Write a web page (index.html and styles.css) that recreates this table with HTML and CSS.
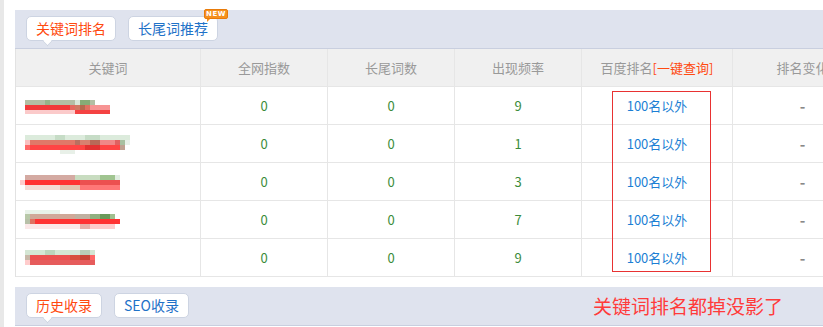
FILE: index.html
```html
<!DOCTYPE html>
<html lang="zh">
<head>
<meta charset="utf-8">
<link rel="stylesheet" href="styles.css">
</head>
<body>
<div class="page">
  <div class="bar">
    <span class="tab active w90">关键词排名</span>
    <span class="tab w90">长尾词推荐<span class="badge">NEW</span></span>
  </div>
  <div class="table">
    <div class="row head">
      <div class="cell">关键词</div>
      <div class="cell">全网指数</div>
      <div class="cell">长尾词数</div>
      <div class="cell">出现频率</div>
      <div class="cell">百度排名<span class="query">[一键查询]</span></div>
      <div class="cell">排名变化</div>
    </div>
    <div class="row">
      <div class="cell kw"><svg width="120" height="37" viewBox="0 0 120 37">
        <rect x="5" y="13" width="70" height="5" fill="#b3bfa4"/><rect x="25" y="13" width="5" height="5" fill="#96b488"/><rect x="55" y="13" width="5" height="5" fill="#d8e8d8"/><rect x="60" y="13" width="10" height="5" fill="#86ad76"/>
        <rect x="5" y="18" width="45" height="5" fill="#f23a3a"/><rect x="50" y="18" width="5" height="5" fill="#e46a5e"/><rect x="55" y="18" width="5" height="5" fill="#d07a62"/><rect x="60" y="18" width="5" height="5" fill="#b66a4e"/><rect x="65" y="18" width="5" height="5" fill="#e07060"/><rect x="70" y="18" width="20" height="5" fill="#f79494"/>
        <rect x="5" y="23" width="50" height="4" fill="#fbcaca"/><rect x="55" y="23" width="35" height="4" fill="#f44242"/>
      </svg></div>
      <div class="cell num">0</div>
      <div class="cell num">0</div>
      <div class="cell num">9</div>
      <div class="cell rank">100名以外</div>
      <div class="cell dash">-</div>
    </div>
    <div class="row">
      <div class="cell kw"><svg width="120" height="37" viewBox="0 0 120 37">
        <rect x="5" y="10" width="105" height="5" fill="#dcebdc"/><rect x="35" y="10" width="10" height="5" fill="#c6dcc6"/><rect x="65" y="10" width="15" height="5" fill="#c6dcc6"/>
        <rect x="5" y="15" width="5" height="5" fill="#f9c0c0"/><rect x="10" y="15" width="45" height="5" fill="#e07868"/><rect x="55" y="15" width="5" height="5" fill="#b87060"/><rect x="60" y="15" width="10" height="5" fill="#d88070"/><rect x="70" y="15" width="10" height="5" fill="#b86a58"/><rect x="80" y="15" width="15" height="5" fill="#f08888"/><rect x="95" y="15" width="5" height="5" fill="#e06060"/><rect x="100" y="15" width="5" height="5" fill="#a8c0a0"/><rect x="105" y="15" width="5" height="5" fill="#e8f0e8"/>
        <rect x="5" y="20" width="5" height="5" fill="#f66"/><rect x="10" y="20" width="90" height="5" fill="#f44"/><rect x="65" y="20" width="15" height="5" fill="#e33232"/><rect x="100" y="20" width="5" height="5" fill="#c0a090"/>
        <rect x="40" y="25" width="15" height="4" fill="#e8f0e8"/>
      </svg></div>
      <div class="cell num">0</div>
      <div class="cell num">0</div>
      <div class="cell num">1</div>
      <div class="cell rank">100名以外</div>
      <div class="cell dash">-</div>
    </div>
    <div class="row">
      <div class="cell kw"><svg width="120" height="37" viewBox="0 0 120 37">
        <rect x="5" y="12" width="50" height="5" fill="#d4aaa2"/><rect x="55" y="12" width="25" height="5" fill="#c8dcc0"/><rect x="80" y="12" width="15" height="5" fill="#a0c490"/><rect x="95" y="12" width="5" height="5" fill="#e0ece0"/>
        <rect x="0" y="17" width="5" height="5" fill="#fcc"/><rect x="5" y="17" width="55" height="5" fill="#f33"/><rect x="60" y="17" width="40" height="5" fill="#ec5050"/>
        <rect x="5" y="22" width="55" height="5" fill="#f4dcd6"/><rect x="40" y="22" width="20" height="5" fill="#e4c4b0"/><rect x="60" y="22" width="40" height="5" fill="#f77"/>
      </svg></div>
      <div class="cell num">0</div>
      <div class="cell num">0</div>
      <div class="cell num">3</div>
      <div class="cell rank">100名以外</div>
      <div class="cell dash">-</div>
    </div>
    <div class="row">
      <div class="cell kw"><svg width="120" height="37" viewBox="0 0 120 37">
        <rect x="5" y="9" width="35" height="4" fill="#e8f2e8"/>
        <rect x="5" y="13" width="5" height="5" fill="#b8c8a8"/><rect x="10" y="13" width="45" height="5" fill="#d0a898"/><rect x="55" y="13" width="15" height="5" fill="#c0b0a0"/><rect x="70" y="13" width="10" height="5" fill="#90b080"/><rect x="80" y="13" width="10" height="5" fill="#6a9a5a"/><rect x="90" y="13" width="5" height="5" fill="#a0c090"/>
        <rect x="5" y="18" width="5" height="5" fill="#b8c0a8"/><rect x="10" y="18" width="5" height="5" fill="#e07060"/><rect x="15" y="18" width="85" height="5" fill="#f33"/>
        <rect x="5" y="23" width="55" height="5" fill="#fbe8e8"/><rect x="60" y="23" width="10" height="5" fill="#e8b0a8"/><rect x="70" y="23" width="25" height="5" fill="#fcc"/>
      </svg></div>
      <div class="cell num">0</div>
      <div class="cell num">0</div>
      <div class="cell num">7</div>
      <div class="cell rank">100名以外</div>
      <div class="cell dash">-</div>
    </div>
    <div class="row">
      <div class="cell kw"><svg width="120" height="37" viewBox="0 0 120 37">
        <rect x="5" y="11" width="70" height="5" fill="#d4e6d4"/><rect x="25" y="11" width="10" height="5" fill="#bcd4bc"/><rect x="60" y="11" width="10" height="5" fill="#b8d0b8"/>
        <rect x="5" y="16" width="5" height="5" fill="#c8b8a8"/><rect x="10" y="16" width="40" height="5" fill="#ec5050"/><rect x="50" y="16" width="10" height="5" fill="#d8503c"/><rect x="60" y="16" width="10" height="5" fill="#c84838"/><rect x="70" y="16" width="5" height="5" fill="#f66"/>
        <rect x="5" y="21" width="5" height="5" fill="#fcc"/><rect x="10" y="21" width="65" height="5" fill="#e65c5c"/>
      </svg></div>
      <div class="cell num">0</div>
      <div class="cell num">0</div>
      <div class="cell num">9</div>
      <div class="cell rank">100名以外</div>
      <div class="cell dash">-</div>
    </div>
    <div class="redbox"></div>
  </div>
  <div class="bar bottom">
    <span class="tab active w76">历史收录</span>
    <span class="tab w75">SEO收录</span>
    <span class="note">关键词排名都掉没影了</span>
  </div>
</div>
</body>
</html>
```
FILE: styles.css
```css
html, body {
  margin: 0;
  padding: 0;
  background: #fff;
  overflow: hidden;
}
body {
  font-family: "Noto Sans CJK SC", "Noto Sans", sans-serif;
  font-size: 13px;
  width: 823px;
  height: 327px;
}
.page {
  border-left: 4px solid #e8e8e8;
  padding: 10px 0 0 11px;
  height: 327px;
  box-sizing: border-box;
  width: 900px;
}
.bar {
  position: relative;
  height: 39px;
  box-sizing: border-box;
  background: #dfe3ee;
  border-bottom: 1px solid #c9cfdf;
  padding: 6px 0 0 11px;
  display: flex;
  gap: 12px;
  align-items: flex-start;
}
.tab {
  position: relative;
  height: 25px;
  box-sizing: border-box;
  background: #fff;
  border: 1px solid #cdd4e2;
  border-radius: 5px;
  color: #1f72c8;
  font-size: 14px;
  line-height: 23px;
  text-align: center;
  white-space: nowrap;
}
.w90 { width: 90px; }
.w76 { width: 76px; }
.w75 { width: 75px; }
.tab.active {
  color: #ff4a10;
}
.tab.active::after {
  content: "";
  position: absolute;
  left: 17px;
  bottom: -5px;
  width: 6px;
  height: 6px;
  background: #fff;
  border-right: 1px solid #cdd4e2;
  border-bottom: 1px solid #cdd4e2;
  transform: rotate(45deg);
}
.badge {
  position: absolute;
  left: 75px;
  top: -8px;
  width: 24px;
  height: 10px;
  box-sizing: border-box;
  background: #f5901e;
  border: 1px solid #e87b0a;
  border-radius: 2px;
  color: #fff;
  font-family: "DejaVu Sans", sans-serif;
  font-size: 7px;
  font-weight: bold;
  line-height: 8px;
  text-align: center;
  letter-spacing: 0.5px;
}
.badge::after {
  content: "";
  position: absolute;
  left: 2px;
  bottom: -4px;
  border-left: 3px solid #f5901e;
  border-right: 3px solid transparent;
  border-bottom: 3px solid transparent;
}
.table {
  position: relative;
  border-left: 1px solid #e2e2e2;
}
.row {
  display: grid;
  grid-template-columns: 185px 127px 127px 127px 151px 140px;
  height: 38px;
}
.cell {
  box-sizing: border-box;
  border-right: 1px solid #e6e6e6;
  border-bottom: 1px solid #e6e6e6;
  display: flex;
  align-items: center;
  justify-content: center;
  height: 38px;
}
.head .cell {
  background: #f0f0f0;
  color: #999;
}
.query {
  color: #ff4a10;
}
.kw {
  justify-content: flex-start;
  padding-left: 4px;
}
.kw svg {
  display: block;
}
.num {
  color: #3b8b3b;
}
.rank {
  color: #1c7fd4;
}
.dash {
  color: #888;
  font-weight: bold;
  font-size: 15px;
}
.redbox {
  position: absolute;
  left: 596px;
  top: 42px;
  width: 99px;
  height: 181px;
  box-sizing: border-box;
  border: 1px solid #e83232;
}
.bar.bottom {
  margin-top: 10px;
}
.note {
  position: absolute;
  left: 578px;
  top: 6px;
  color: #ff3b3b;
  font-size: 19px;
  line-height: 25px;
  white-space: nowrap;
}
```
